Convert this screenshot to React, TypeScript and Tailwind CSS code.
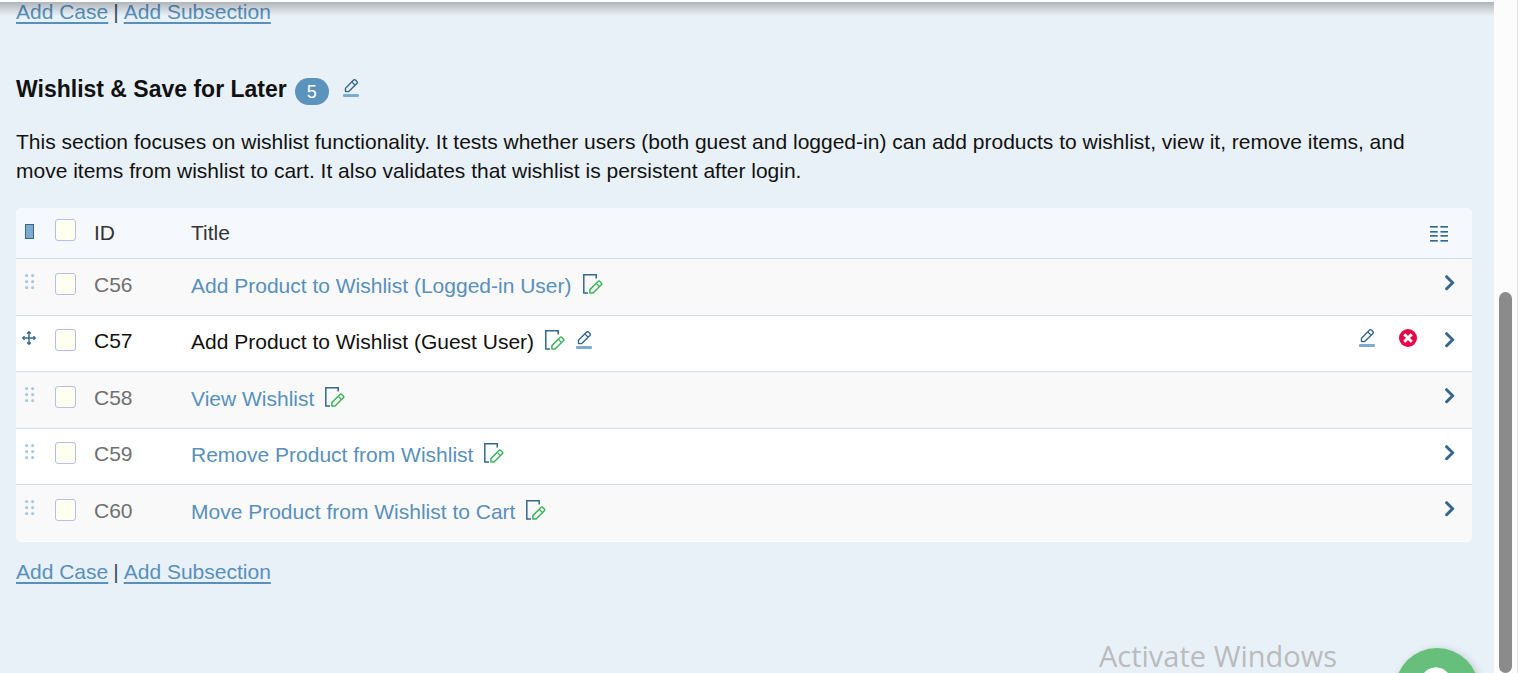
import React from "react";

type TestCase = { id: string; title: string; active?: boolean };

const cases: TestCase[] = [
  { id: "C56", title: "Add Product to Wishlist (Logged-in User)" },
  { id: "C57", title: "Add Product to Wishlist (Guest User)", active: true },
  { id: "C58", title: "View Wishlist" },
  { id: "C59", title: "Remove Product from Wishlist" },
  { id: "C60", title: "Move Product from Wishlist to Cart" },
];

function PencilIcon() {
  return (
    <svg width="16" height="18" viewBox="0 0 16 18" fill="none" className="block">
      <path d="M2.5 12.6V9.2L10.600 1.100a1.300 1.300 0 0 1 1.800 0l1.500 1.500a1.300 1.300 0 0 1 0 1.800L5.700 12.600Z" stroke="#35678c" strokeWidth="1.4" strokeLinejoin="round" />
      <path d="m8.900 3 3.100 3.100" stroke="#35678c" strokeWidth="1.2" />
      <rect x="0" y="15" width="16" height="3" rx="1.2" fill="#7cabcf" />
    </svg>
  );
}

function EditPageIcon() {
  return (
    <svg width="20" height="20" viewBox="0 0 20 20" fill="none" className="block">
      <path d="M13.200 4.500V.8H.8v18.200H5" stroke="#35678c" strokeWidth="1.500" />
      <path d="M6.900 19v-3.400L15 7.500a1.300 1.300 0 0 1 1.800 0l1.500 1.500a1.300 1.300 0 0 1 0 1.800L10.100 19Z" stroke="#3cb55a" strokeWidth="1.5" strokeLinejoin="round" />
      <path d="m13.300 9.400 3.100 3.100" stroke="#3cb55a" strokeWidth="1.2" />
    </svg>
  );
}

function DragDots() {
  return (
    <svg width="10" height="16" viewBox="0 0 10 16" fill="#a9c9df" className="block">
      {[1.6, 7.6, 13.6].map((y) => (
        <g key={y}>
          <circle cx="1.6" cy={y} r="1.6" />
          <circle cx="7.6" cy={y} r="1.6" />
        </g>
      ))}
    </svg>
  );
}

function MoveIcon() {
  return (
    <svg width="14" height="14" viewBox="0 0 14 14" fill="none" className="block">
      <path d="M7 1v12M1 7h12" stroke="#35678c" strokeWidth="1.5" />
      <path d="M5.2 2.6 7 .8l1.800 1.800M5.200 11.400 7 13.200l1.800-1.800M2.600 5.200.8 7l1.800 1.800M11.400 5.200 13.200 7l-1.800 1.800" stroke="#35678c" strokeWidth="1.5" strokeLinejoin="round" />
    </svg>
  );
}

function ChevronIcon() {
  return (
    <svg width="10" height="16" viewBox="0 0 10 16" fill="none" className="block">
      <path d="M1.600 1.700 7.700 7.700l-6.100 6" stroke="#35678c" strokeWidth="3" strokeLinecap="round" strokeLinejoin="round" />
    </svg>
  );
}

function DeleteIcon() {
  return (
    <svg width="18" height="18" viewBox="0 0 18 18" className="block">
      <circle cx="9" cy="9" r="9" fill="#e60548" />
      <path d="m5.300 5.300 7.400 7.400m0-7.400-7.400 7.400" stroke="#fff" strokeWidth="3" />
    </svg>
  );
}

function ColumnsIcon() {
  return (
    <svg width="18" height="16" viewBox="0 0 18 16" className="block">
      {[0, 5, 9, 14].map((y) => (
        <g key={y}>
          <rect x="0" y={y} width="8" height="2" fill="#9fc0d8" />
          <rect x="10.500" y={y} width="7.500" height="2" fill="#9fc0d8" />
          <rect x="0" y={y} width="7.500" height="1.400" fill="#35678c" />
          <rect x="10.500" y={y} width="7.500" height="1.400" fill="#35678c" />
        </g>
      ))}
    </svg>
  );
}

function CheckBox({ label }: { label: string }) {
  return (
    <input
      type="checkbox"
      aria-label={label}
      className="block h-[22px] w-[21px] appearance-none rounded-[3px] border border-[#b5bdec] bg-[#fffff0] checked:bg-[#5b93bd]"
    />
  );
}

function SectionLinks() {
  return (
    <nav className="flex gap-[5px] leading-6 text-[#3f4a5c]">
      <a href="#add-case" className="text-[#5890bb] underline decoration-2 underline-offset-[3px]">Add Case</a>
      <span>|</span>
      <a href="#add-subsection" className="text-[#5890bb] underline decoration-2 underline-offset-[3px]">Add Subsection</a>
    </nav>
  );
}

export default function App() {
  return (
    <div className="relative flex h-screen overflow-hidden bg-[#e9f1f8] font-['Liberation_Sans',Arial,sans-serif] text-[21px] text-[#111]">
      <main className="min-w-0 flex-1 pl-4 pr-[22px]">
        <SectionLinks />

        <header className="mt-[51px] flex h-8 items-start">
          <h2 className="text-[23px] leading-7 font-bold">Wishlist &amp; Save for Later</h2>
          <span className="ml-2 mt-[3px] flex h-[27px] w-[34px] items-center justify-center rounded-full bg-[#5b93bd] text-lg text-white">5</span>
          <button type="button" aria-label="Edit section" className="ml-3.5 mt-1"><PencilIcon /></button>
        </header>

        <p className="mt-5 pr-14 leading-[29px]">
          This section focuses on wishlist functionality. It tests whether users (both guest and logged-in) can add products to wishlist, view it, remove items, and move items from wishlist to cart. It also validates that wishlist is persistent after login.
        </p>

        <div className="mt-[23px] overflow-hidden rounded-[5px]">
          <table className="w-full table-fixed border-separate border-spacing-0 text-left">
            <thead className="bg-[#f5f9fe]">
              <tr className="h-[51px] align-top text-[#333]">
                <th scope="col" className="w-[39px] border-b border-[#cfdfea] pl-[9px] pt-4">
                  <span className="block h-[15px] w-[9px] border border-[#35678c] bg-[#7cabcf]" />
                </th>
                <th scope="col" className="w-[39px] border-b border-[#cfdfea] pt-[11px]"><CheckBox label="Select all cases" /></th>
                <th scope="col" className="w-[97px] border-b border-[#cfdfea] pt-[13px] leading-6 font-normal">ID</th>
                <th scope="col" className="border-b border-[#cfdfea] pt-[13px] leading-6 font-normal">Title</th>
                <th scope="col" className="w-[140px] border-b border-[#cfdfea] pr-6 pt-[18px]">
                  <button type="button" aria-label="Choose columns" className="ml-auto block"><ColumnsIcon /></button>
                </th>
              </tr>
            </thead>
            <tbody className="[&>tr:last-child>td]:border-[#ffffff]">
              {cases.map((c) => (
                <tr key={c.id} className="group align-top odd:h-[57px] odd:bg-[#f9f9f9] even:h-14 even:bg-white">
                  <td className={c.active ? "border-b border-[#cfdfea] pl-1.5 pt-[15px]" : "border-b border-[#cfdfea] pl-[9px] pt-[15px]"}>
                    {c.active ? <MoveIcon /> : <DragDots />}
                  </td>
                  <td className="border-b border-[#cfdfea] pt-3.5 group-even:pt-[13px]"><CheckBox label={"Select " + c.id} /></td>
                  <td className={c.active ? "border-b border-[#cfdfea] pt-3.5 leading-6 group-even:pt-[13px]" : "border-b border-[#cfdfea] pt-3.5 leading-6 text-[#707070] group-even:pt-[13px]"}>{c.id}</td>
                  <td className="border-b border-[#cfdfea] pt-[15px] group-even:pt-3.5">
                    <div className="flex items-start gap-[11px] leading-6">
                      <a href={"#" + c.id} className={c.active ? "" : "text-[#5890bb]"}>{c.title}</a>
                      <button type="button" aria-label={"Edit details of " + c.title}><EditPageIcon /></button>
                      {c.active && <button type="button" aria-label="Rename case" className="pt-px"><PencilIcon /></button>}
                    </div>
                  </td>
                  <td className="border-b border-[#cfdfea] pr-[17px] pt-[13px]">
                    <div className="flex items-start justify-end">
                      {c.active && (
                        <>
                          <button type="button" aria-label="Edit case" className="mr-6"><PencilIcon /></button>
                          <button type="button" aria-label="Delete case" className="mr-7"><DeleteIcon /></button>
                        </>
                      )}
                      <button type="button" aria-label={"Open " + c.id} className="pt-[3px]"><ChevronIcon /></button>
                    </div>
                  </td>
                </tr>
              ))}
            </tbody>
          </table>
        </div>

        <div className="mt-[18px]"><SectionLinks /></div>
      </main>

      <div className="flex w-6 shrink-0 flex-col border-r border-[#e2e2e2] bg-[#fcfcfc] pl-[5px]">
        <div className="mt-[292px] w-[13px] flex-1 rounded-full bg-[#8b8b8b]" />
      </div>

      <div className="pointer-events-none absolute top-0 right-6 left-0">
        <div className="h-0.5 bg-[#fcfcfc]" />
        <div className="h-3.5 bg-linear-to-b from-black/25 to-transparent" />
      </div>

      <div className="pointer-events-none absolute right-[181px] bottom-px font-['Open_Sans',sans-serif] text-[29px] leading-8 text-[#b9bbbd]">Activate Windows</div>

      <button type="button" aria-label="Help" className="absolute right-[39px] bottom-[-59px] h-[84px] w-[84px] rounded-full bg-[#66c07b] shadow-[2px_2px_8px_rgba(0,0,0,0.2)]">
        <svg width="84" height="84" viewBox="0 0 84 84" fill="none" className="block">
          <path d="M29 35a12 12 0 1 1 19 9c-4 2.500-6 4-6 9" stroke="#fff" strokeWidth="6" strokeLinecap="round" />
          <circle cx="42" cy="61" r="4" fill="#fff" />
        </svg>
      </button>
    </div>
  );
}
